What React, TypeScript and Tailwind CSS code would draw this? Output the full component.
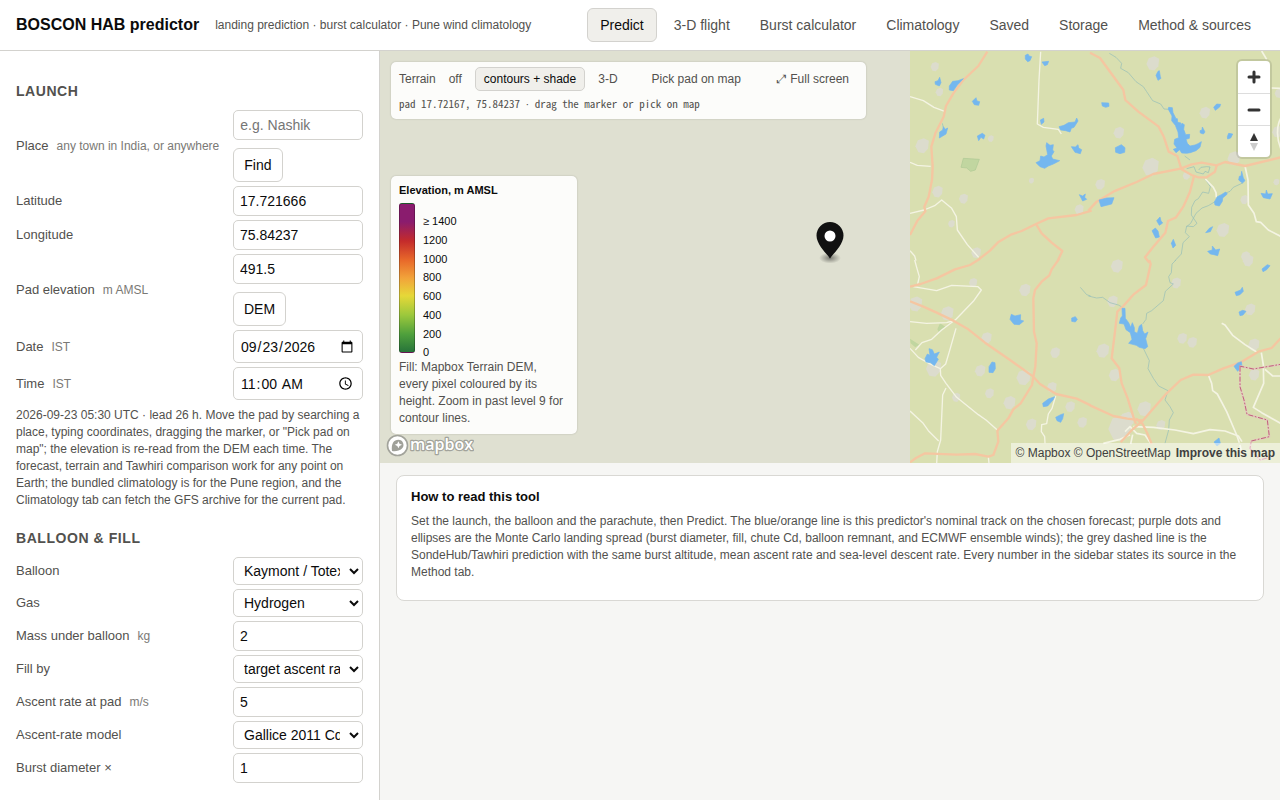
import { useState } from "react";
import type { ReactNode } from "react";

const tabs = ["Predict", "3-D flight", "Burst calculator", "Climatology", "Saved", "Storage", "Method & sources"];

const ticks = ["≥ 1400", "1200", "1000", "800", "600", "400", "200", "0"];

const inputClass =
  "block w-full h-[30px] px-1.5 text-sm text-[#0b0b0b] bg-white border border-[#d3d2ce] rounded-[5px] placeholder:text-[#757575]";
const selectClass = "block w-full h-7 px-1.5 text-sm text-[#0b0b0b] bg-white border border-[#d3d2ce] rounded-[5px]";
const buttonClass = "mt-2 h-[34px] px-2.5 text-sm text-[#0b0b0b] bg-white border border-[#d3d2ce] rounded-md";

// Each tile is drawn in its own 570 x 630 grid
const tiles = [
  {
    x: 0,
    y: 0,
    towns: [[104, 50, 11], [118, 126, 10], [66, 287, 18], [112, 425, 14], [190, 446, 12], [154, 521, 9], [228, 608, 13], [537, 478, 12], [272, 266, 8], [394, 392, 7]],
    park: "M190 325 L238 328 L226 360 L212 364 L200 354 L183 352Z",
    minor: [
      "M30 140 L70 152 L102 172 L134 184",
      "M30 337 L52 346 L92 349",
      "M30 490 L72 480 L104 467 L125 450 L155 475 L169 500 L172 540 L202 584 L236 622",
      "M422 5 L417 90 L412 222 L430 232 L475 238 L484 252",
      "M30 602 L44 618 L48 632",
    ],
    major: [
      "M262 5 L235 48 L190 90 L160 130 L138 168 L131 200 L106 250 L94 290 L98 350 L96 390 L86 440 L73 470 L76 484 L52 512 L30 555",
      "M236 628 L270 602 L294 577 L335 553 L365 543 L408 522 L445 505 L530 495 L575 482",
      "M408 522 L425 550 L455 578 L487 603 L473 632",
    ],
    rivers: ["M127 220 L130 232"],
    water: [
      "M376 16 L384 12 L387 18 L395 20 L390 32 L383 35 L376 27Z",
      "M426 36 L446 34 L442 44 L434 47Z",
      "M105 95 L114 92 L119 82 L123 98 L118 108 L106 103Z",
      "M148 108 L158 94 L174 92 L190 86 L172 105 L160 122 L148 120Z",
      "M217 154 L228 143 L231 153 L239 155 L236 166 L223 164Z",
      "M119 246 L128 240 L130 230 L136 238 L143 234 L138 252 L128 258 L118 264Z",
      "M232 258 L247 250 L255 256 L251 267 L243 262 L236 272Z",
      "M421 210 L431 205 L432 216 L424 223Z",
      "M477 230 L492 226 L505 218 L525 216 L530 204 L534 213 L522 232 L514 235 L510 246 L497 242 L482 240Z",
      "M408 338 L420 332 L422 318 L432 321 L443 314 L438 288 L440 278 L450 286 L460 284 L458 300 L462 305 L454 318 L458 327 L479 332 L460 342 L445 348 L434 355 L420 350Z",
      "M514 290 L526 291 L534 284 L536 294 L545 299 L541 311 L525 307Z",
      "M538 434 L548 438 L556 432 L554 442 L560 448 L548 453Z",
    ],
    border: "",
  },
  {
    x: 570,
    y: 0,
    towns: [[188, 40, 17], [344, 188, 14], [86, 248, 14], [181, 351, 22], [30, 403, 13], [398, 540, 17], [431, 325, 17], [463, 449, 11], [562, 245, 14], [566, 130, 11], [466, 619, 12], [559, 396, 8], [289, 377, 10]],
    park: "",
    minor: [
      "M515 3 L530 28",
      "M545 114 L572 115",
      "M572 205 C558 230 561 270 572 295",
      "M346 387 L370 412 L378 428 L379 442",
      "M465 348 L474 390 L475 465 L492 490 L499 515 L512 517 L535 540 L572 559",
    ],
    major: [
      "M0 8 L30 24 L100 120 L106 150 L145 185 L206 230 L222 262 L236 305 L262 318 L272 350 L272 356",
      "M-5 482 L20 455 L70 425 L140 396 L190 372 L272 356 L305 343 L335 338 L380 346 L405 336 L465 348 L572 322",
      "M272 356 L305 375 L325 382 L350 382 L375 365 L380 346",
      "M312 378 L300 425 L280 470 L258 502 L234 513 L226 548 L190 590 L165 622 L178 638",
    ],
    rivers: [
      "M58 10 L78 22 L95 40 L92 55 L115 68 L138 95 L160 110 L170 125 L188 152 L212 162 L222 177 L240 178",
      "M284 318 L300 330 M290 356 L312 350 L318 366 L340 372 L345 364 L355 368 L360 351 L350 350 L333 352 L326 360",
      "M345 387 L361 410 L356 430 L338 426 L325 446 L315 452 L305 472 L304 495 L321 520 L310 530 L290 528 L286 548 L298 560 L279 578 L274 612 L255 632",
      "M460 398 L430 412 L420 424 L405 430 M375 455 L355 467 L336 474 L318 490 L302 520 L290 530",
    ],
    water: [
      "M35 158 L56 159 L57 169 L47 172 L37 168Z",
      "M198 76 L204 64 L208 62 L211 80 L213 85 L204 91Z",
      "M371 172 L380 162 L392 163 L389 171 L376 181Z",
      "M236 172 L247 173 L249 188 L258 206 L262 206 L263 217 L273 219 L270 228 L276 220 L283 224 L281 238 L287 254 L299 253 L298 265 L288 268 L292 280 L300 288 L315 285 L324 281 L334 275 L330 292 L318 302 L301 308 L290 310 L275 309 L269 299 L258 308 L250 298 L261 294 L252 282 L254 268 L266 263 L264 246 L256 226 L245 212 L246 198 L235 178Z",
      "M330 242 L336 240 L337 231 L345 246 L340 252 L331 249Z",
      "M412 260 L416 250 L428 252 L422 264 L413 267Z",
      "M76 293 L94 284 L105 293 L104 307 L90 311 L77 307Z",
      "M455 364 L460 384 L465 392 L457 399 L446 390 L448 379 L453 378Z",
      "M27 450 L50 444 L72 443 L65 462 L33 470Z",
      "M373 456 L382 440 L394 434 L407 426 L412 432 L398 444 L397 454 L388 468 L375 465Z",
      "M513 430 L527 432 L529 420 L533 432 L547 431 L540 447 L520 443Z",
      "M200 512 L210 501 L213 513 L218 519 L208 526Z",
      "M186 542 L196 534 L204 543 L208 561 L197 564Z",
      "M244 580 L250 568 L257 586 L249 594Z",
      "M347 548 L358 535 L368 530 L361 545Z",
      "M353 604 L367 600 L367 588 L377 600 L389 597 L383 617 L372 614 L361 612Z",
    ],
    border: "",
  },
  {
    x: 0,
    y: 630,
    towns: [[219, 68, 11], [374, 90, 15], [141, 160, 17], [259, 234, 14], [465, 278, 13], [240, 332, 14], [268, 400, 12], [328, 428, 16], [370, 352, 19], [393, 493, 14], [455, 382, 13], [510, 440, 13], [546, 487, 13], [100, 325, 20], [168, 412, 11], [46, 132, 18]],
    park: "M30 236 L58 254 L46 262 L32 250Z M112 208 L120 190 L136 200 L118 218Z",
    minor: [
      "M44 0 L50 22 L58 50 L53 72",
      "M40 80 L110 92 L155 76 L234 80 L244 90 L220 124 L168 178 L125 210 L95 238 L66 248 L46 270",
      "M30 185 L80 190 L140 188 L157 183",
      "M30 265 L55 292 L90 312 L121 326",
      "M168 205 L148 275 L137 312 L121 326 L122 346 L138 370 L170 412 L235 464 L258 480 L292 510",
      "M138 384 L128 405 L122 540 L112 575 L110 610",
      "M30 453 L68 488 L85 512 L116 543",
      "M467 408 L456 445 L445 462 L440 491 L425 494 L424 515 L434 530 L435 550",
      "M265 590 L267 610",
    ],
    major: [
      "M30 80 L62 72 L110 55 L165 28 L210 15 L240 -4",
      "M30 124 L70 140 L110 158 L160 182 L205 208 L255 248 L330 300 L400 350 L420 372 L468 402 L530 416 L572 436",
      "M478 -4 L455 28 L448 46 L425 65 L405 90 L400 115 L402 215 L410 250 L406 320 L400 350 L396 375 L362 430 L340 448 L325 475 L292 512 L295 545 L280 585 L265 590 L225 582 L170 584 L75 580 L48 594 L30 607",
    ],
    rivers: ["M541 82 L560 104 L572 108"],
    water: [
      "M330 178 L334 163 L345 168 L362 164 L361 180 L371 183 L358 194 L342 193Z",
      "M515 174 L526 170 L532 178 L526 186 L515 184Z",
      "M75 296 L82 282 L90 286 L87 266 L97 269 L103 282 L118 276 L110 292 L115 298 L103 317 L92 308 L78 306Z",
      "M267 320 L276 306 L285 308 L286 326 L279 338 L267 337Z",
      "M428 430 L445 417 L464 410 L459 420 L443 438 L430 440Z",
      "M467 472 L482 464 L491 461 L488 476 L482 487 L471 482Z",
    ],
    border: "",
  },
  {
    x: 570,
    y: 630,
    towns: [[80, 18, 16], [67, 124, 14], [258, 69, 13], [38, 272, 17], [73, 345, 15], [276, 235, 13], [306, 247, 13], [480, 148, 14], [491, 254, 15], [492, 344, 14], [162, 446, 18], [90, 504, 32], [212, 495, 12], [474, 2, 14], [110, 480, 20]],
    park: "",
    minor: [
      "M395 190 L405 195 L428 226 L465 254 L500 276",
      "M514 278 L520 315 L521 370 L490 442 L515 458 L550 478 L572 490",
      "M525 328 L548 348 L572 348",
      "M355 345 L365 370 L368 392 L382 402 L410 455 L440 525 L448 548",
      "M130 500 L190 502 L255 510 L310 521 L360 509 L405 513 L445 528 L456 545",
      "M105 515 L120 500 L140 520 L165 525 L182 550 M40 550 L90 538 L120 524 M128 524 L122 552 M450 555 L458 590",
    ],
    major: [
      "M178 0 L182 12 L168 75 L130 104 L100 138 L82 155 L75 215 L65 295 L88 325 L95 370 L113 415 L130 470 L138 492",
      "M0 436 L70 468 L112 476 L160 482",
      "M92 547 L128 508 L160 480 L230 400 L272 360 L310 344 L355 345 L400 325 L450 308 L505 275 L545 264 L572 235",
      "M138 476 L158 492 L172 520 L185 552",
    ],
    rivers: [
      "M-5 108 L20 114 L38 112 L60 128 L85 135 L98 142",
      "M258 0 L246 12 L244 38 L236 50 L240 68 L250 72 L226 94 L220 122 L185 152 L170 160 L168 178 L158 192",
      "M160 265 L178 302 L174 326 L190 355 L206 378 L234 392 L225 420 L240 440 L250 458 L238 480 L236 510 L225 550",
    ],
    water: [
      "M96 145 L105 145 L106 175 L116 188 L122 202 L127 188 L133 203 L133 215 L142 220 L148 198 L155 193 L158 212 L164 222 L174 216 L167 236 L173 260 L165 266 L148 262 L139 256 L116 250 L126 238 L121 218 L108 209 L102 192 L88 190 L92 174 L97 168Z",
      "M516 27 L532 14 L540 17 L530 29 L519 35Z",
      "M435 97 L452 90 L457 82 L460 94 L450 104 L439 107Z",
      "M447 156 L458 151 L468 154 L459 165 L450 167Z",
      "M432 319 L443 309 L454 305 L456 318 L443 334Z",
      "M372 546 L387 534 L391 550 L381 558Z",
    ],
    border: "M448 318 L490 327 L572 313 M450 320 L450 380 L462 420 L471 463 L532 480 L538 530 L484 543 L480 565 L510 600 L545 590",
  },
];

function TerrainMap() {
  return (
    <svg viewBox="30 3 1110 1236" preserveAspectRatio="xMinYMin slice" className="block w-full h-full" aria-hidden="true">
      <rect x="30" y="3" width="1110" height="1236" fill="#d9dfb0" />
      {tiles.map((t) => (
        <g key={`${t.x}-${t.y}`} transform={`translate(${t.x} ${t.y})`} fill="none" strokeLinejoin="round">
          {t.towns.map(([cx, cy, r]) => (
            <path
              key={`${cx}-${cy}`}
              transform={`translate(${cx} ${cy}) scale(${r})`}
              fill="#dcdccd"
              d="M-1.100 .1 L-.7 -.9 L.3 -1.250 L1.150 -.8 L1 .5 L.3 1.250 L-.6 1.100Z"
            />
          ))}
          <path d={t.park} fill="#c1d6a0" stroke="#aec994" strokeWidth={t.y ? 0 : 2} />
          {t.rivers.map((d) => (
            <path key={d} d={d} stroke="#93bdb8" strokeWidth="2" />
          ))}
          {t.minor.map((d) => (
            <path key={d} d={d} stroke="#f4f4e3" strokeWidth={t.x ? 5 : 4} />
          ))}
          {t.major.map((d) => (
            <path key={d} d={d} stroke="#f5c6a1" strokeWidth="7" />
          ))}
          {t.water.map((d) => (
            <path key={d} d={d} fill="#74b7ef" stroke="#74b7ef" strokeWidth="2" />
          ))}
          <path d={t.border} stroke="#e3c9bd" strokeWidth="6" />
          <path d={t.border} stroke="#c0627b" strokeWidth="3" strokeDasharray="15 5 5 5" />
        </g>
      ))}
    </svg>
  );
}

function MapboxLogo() {
  return (
    <svg width="88" height="24" viewBox="0 0 88 24" aria-label="Mapbox logo" role="img">
      <circle cx="11.5" cy="12.5" r="10" fill="#fff" stroke="#a2a39b" strokeWidth="1.6" />
      <path d="M6 18 C5 10.500 8 6.700 12.400 6.700 A5.200 5.200 0 0 1 16 15.500 C13.500 18 9.500 18.500 6 18Z" fill="#a0a19a" />
      <path d="M12.400 8.300 L13.500 10.700 L16 11.800 L13.500 12.900 L12.400 15.300 L11.300 12.900 L8.800 11.800 L11.300 10.700Z" fill="#fff" />
      <text
        x="24"
        y="17"
        fontFamily="'Open Sans', 'Noto Sans', sans-serif"
        fontSize="16"
        fontWeight="600"
        fill="#fff"
        stroke="#a2a39b"
        strokeWidth="2.4"
        strokeLinejoin="round"
        paintOrder="stroke"
      >
        mapbox
      </text>
    </svg>
  );
}

function Row({ id, label, hint, children }: { id: string; label: string; hint?: string; children: ReactNode }) {
  return (
    <div className="grid grid-cols-[1fr_130px] items-center gap-3.5">
      <label htmlFor={id} className="text-[13px] leading-5 whitespace-nowrap">
        {label}
        {hint && <span className="ml-2 text-xs text-[#7a7975]">{hint}</span>}
      </label>
      <div>{children}</div>
    </div>
  );
}

function Sidebar() {
  return (
    <aside className="w-[380px] shrink-0 px-4 pt-8 pb-4 bg-white border-r border-[#d3d2ce]">
      <h2 className="text-sm leading-4 font-bold uppercase tracking-[0.04em]">Launch</h2>
      <div className="mt-[11px] flex flex-col gap-1">
        <Row id="place" label="Place" hint="any town in India, or anywhere">
          <input id="place" type="text" placeholder="e.g. Nashik" className={inputClass} />
          <button type="button" className={buttonClass}>Find</button>
        </Row>
        <Row id="lat" label="Latitude">
          <input id="lat" type="number" step="any" defaultValue="17.721666" className={inputClass} />
        </Row>
        <Row id="lon" label="Longitude">
          <input id="lon" type="number" step="any" defaultValue="75.84237" className={inputClass} />
        </Row>
        <Row id="elev" label="Pad elevation" hint="m AMSL">
          <input id="elev" type="number" step="any" defaultValue="491.5" className={inputClass} />
          <button type="button" className={buttonClass}>DEM</button>
        </Row>
        <Row id="date" label="Date" hint="IST">
          <input id="date" type="date" defaultValue="2026-09-23" className={`${inputClass} h-[33px]`} />
        </Row>
        <Row id="time" label="Time" hint="IST">
          <input id="time" type="time" defaultValue="11:00" className={`${inputClass} h-[33px]`} />
        </Row>
      </div>
      <p className="mt-[7px] text-xs leading-[17px]">
        2026-09-23 05:30 UTC · lead 26 h. Move the pad by searching a place, typing coordinates, dragging the marker, or
        "Pick pad on map"; the elevation is re-read from the DEM each time. The forecast, terrain and Tawhiri comparison
        work for any point on Earth; the bundled climatology is for the Pune region, and the Climatology tab can fetch
        the GFS archive for the current pad.
      </p>

      <h2 className="mt-[21px] text-sm leading-4 font-bold uppercase tracking-[0.04em]">Balloon &amp; fill</h2>
      <div className="mt-[11px] flex flex-col gap-1">
        <Row id="balloon" label="Balloon">
          <select id="balloon" className={selectClass}>
            <option>Kaymont / Totex 1000</option>
          </select>
        </Row>
        <Row id="gas" label="Gas">
          <select id="gas" className={selectClass}>
            <option>Hydrogen</option>
            <option>Helium</option>
          </select>
        </Row>
        <Row id="mass" label="Mass under balloon" hint="kg">
          <input id="mass" type="number" defaultValue="2" className={inputClass} />
        </Row>
        <Row id="fillby" label="Fill by">
          <select id="fillby" className={selectClass}>
            <option>target ascent rate</option>
          </select>
        </Row>
        <Row id="ascent" label="Ascent rate at pad" hint="m/s">
          <input id="ascent" type="number" defaultValue="5" className={inputClass} />
        </Row>
        <Row id="model" label="Ascent-rate model">
          <select id="model" className={selectClass}>
            <option>Gallice 2011 Cd curve</option>
          </select>
        </Row>
        <Row id="burst" label="Burst diameter ×">
          <input id="burst" type="number" defaultValue="1" className={inputClass} />
        </Row>
      </div>
    </aside>
  );
}

function MapToolbar() {
  const [terrain, setTerrain] = useState("contours + shade");
  const pill = "h-6 px-2 border rounded-[5px]";

  return (
    <div className="absolute top-[11px] left-[11px] px-2 pt-[5px] pb-[7px] rounded-[5px] bg-[#fcfcfa] shadow-[0_0_2px_rgba(0,0,0,0.2)] text-xs">
      <div className="flex items-center gap-1">
        <span>Terrain</span>
        {["off", "contours + shade", "3-D"].map((mode) => (
          <button
            key={mode}
            type="button"
            onClick={() => setTerrain(mode)}
            className={`${pill} ${terrain === mode ? "bg-[#f0efeb] border-[#d3d2ce] text-[#0b0b0b]" : "border-transparent"}`}
          >
            {mode}
          </button>
        ))}
        <button type="button" className={`${pill} ml-3 border-transparent`}>Pick pad on map</button>
        <button type="button" className={`${pill} ml-3.5 border-transparent`}>⤢ Full screen</button>
      </div>
      <div className="mt-1 text-[11px] leading-4 font-['Noto_Sans_Mono_CJK_SC','Noto_Sans_Mono_CJK_JP',monospace]">
        pad 17.72167, 75.84237 <span className="font-['Liberation_Sans',sans-serif]">·</span> drag the marker or pick on
        map
      </div>
    </div>
  );
}

function Legend() {
  return (
    <div className="absolute bottom-[29px] left-[11px] w-[186px] px-2 pt-1.5 pb-[7px] rounded-[5px] bg-[#fcfcfa] shadow-[0_0_2px_rgba(0,0,0,0.2)]">
      <div className="text-[11px] leading-4 font-bold text-[#0b0b0b]">Elevation, m AMSL</div>
      <div className="mt-[5px] flex gap-2 h-[150px]">
        <div className="w-4 rounded-[3px] border border-black/25 bg-[linear-gradient(to_top,#27743a_0%,#4fa03c_12%,#9cc83c_25%,#e6d838_38%,#f2a33a_50%,#e8692a_62%,#c42b2b_75%,#8a1c6e_88%,#8a1c6e_100%)]" />
        <div className="flex flex-col h-[159px] pt-[9px] text-[11px] text-[#0b0b0b]">
          {ticks.map((t) => (
            <div key={t} className="flex-1 flex items-center">{t}</div>
          ))}
        </div>
      </div>
      <p className="mt-1.5 pr-1 text-xs leading-[17px]">
        Fill: Mapbox Terrain DEM, every pixel coloured by its height. Zoom in past level 9 for contour lines.
      </p>
    </div>
  );
}

function MapControls() {
  return (
    <div className="absolute top-2.5 right-2.5 w-8 flex flex-col rounded bg-white text-[#333] shadow-[0_0_0_2px_rgba(0,0,0,0.1)]">
      <button type="button" aria-label="Zoom in" className="h-8 flex items-center justify-center">
        <svg width="14" height="14" viewBox="0 0 14 14" stroke="currentColor" strokeWidth="3" strokeLinecap="round">
          <path d="M2 7h10M7 2v10" />
        </svg>
      </button>
      <button type="button" aria-label="Zoom out" className="h-8 flex items-center justify-center border-t border-[#ddd]">
        <svg width="14" height="14" viewBox="0 0 14 14" stroke="currentColor" strokeWidth="3" strokeLinecap="round">
          <path d="M2 7h10" />
        </svg>
      </button>
      <button type="button" aria-label="Reset bearing to north" className="h-8 flex items-center justify-center border-t border-[#ddd]">
        <svg width="10" height="20" viewBox="0 0 10 20">
          <path d="M1 9 L5 1 L9 9Z" fill="#333" />
          <path d="M1 11 L5 19 L9 11Z" fill="#ccc" />
        </svg>
      </button>
    </div>
  );
}

export default function App() {
  const [tab, setTab] = useState("Predict");

  return (
    <div className="min-h-screen flex flex-col bg-[#f6f6f4] text-[#52514e] font-['Liberation_Sans',Arial,sans-serif]">
      <header className="flex items-center gap-4 px-4 py-2 bg-white border-b border-[#d3d2ce]">
        <h1 className="text-base font-bold text-[#0b0b0b]">BOSCON HAB predictor</h1>
        <span className="text-xs">landing prediction · burst calculator · Pune wind climatology</span>
        <nav className="ml-auto flex gap-1" aria-label="Main">
          {tabs.map((name) => (
            <button
              key={name}
              type="button"
              onClick={() => setTab(name)}
              className={`h-[34px] px-3 text-sm border rounded-md ${
                tab === name ? "bg-[#f0efeb] border-[#d3d2ce] text-[#0b0b0b]" : "border-transparent"
              }`}
            >
              {name}
            </button>
          ))}
        </nav>
      </header>

      <div className="flex flex-1">
        <Sidebar />
        <main className="flex-1 min-w-0">
          <section className="relative flex h-[412px] overflow-hidden bg-[#dfe0d1]" aria-label="Map">
            {/* Tiles start past the unloaded area */}
            <div className="flex-1 ml-[530px]">
              <TerrainMap />
            </div>

            <svg className="absolute top-[170px] left-[435px]" width="30" height="44" viewBox="0 0 30 44" aria-hidden="true">
              <defs>
                <radialGradient id="pin-shadow">
                  <stop offset="0%" stopOpacity="0.45" />
                  <stop offset="100%" stopOpacity="0" />
                </radialGradient>
              </defs>
              <ellipse cx="15" cy="37" rx="11" ry="5.500" fill="url(#pin-shadow)" />
              <path d="M15 37.500 C13 34 1.500 24 1.500 14.500 A13.500 13.500 0 0 1 28.500 14.500 C28.500 24 17 34 15 37.500Z" fill="#111" />
              <circle cx="15" cy="15" r="5.500" fill="#fff" />
            </svg>

            <MapToolbar />
            <Legend />
            <MapControls />
            <div className="absolute bottom-1.5 left-1.5">
              <MapboxLogo />
            </div>
            <div className="absolute bottom-0 right-0 px-[5px] flex gap-[5px] text-xs leading-5 text-[#404040] bg-white/50">
              <span>
                <a href="#mapbox">© Mapbox</a> <a href="#osm">© OpenStreetMap</a>
              </span>
              <a href="#improve" className="font-bold">Improve this map</a>
            </div>
          </section>

          <section className="mx-4 mt-3 px-3.5 pt-3 pb-[19px] bg-white border border-[#d9d8d4] rounded-lg">
            <h3 className="text-[13px] leading-[18px] font-bold text-[#0b0b0b]">How to read this tool</h3>
            <p className="mt-[7px] text-xs leading-[17px]">
              Set the launch, the balloon and the parachute, then Predict. The blue/orange line is this predictor's
              nominal track on the chosen forecast; purple dots and ellipses are the Monte Carlo landing spread (burst
              diameter, fill, chute Cd, balloon remnant, and ECMWF ensemble winds); the grey dashed line is the
              SondeHub/Tawhiri prediction with the same burst altitude, mean ascent rate and sea-level descent rate.
              Every number in the sidebar states its source in the Method tab.
            </p>
          </section>
        </main>
      </div>
    </div>
  );
}
